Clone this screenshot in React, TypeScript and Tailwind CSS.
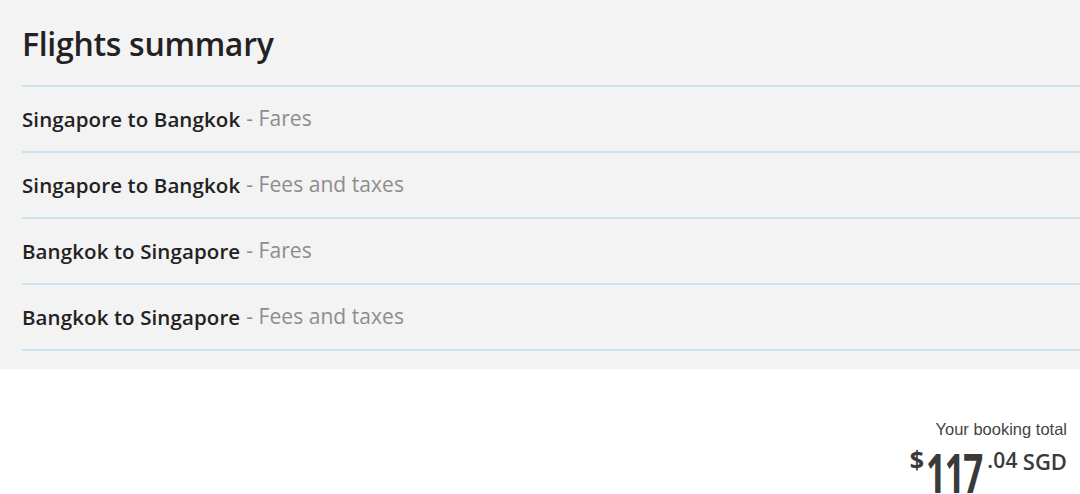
import React from "react";

type Row = { route: string; kind: string };

const rows: Row[] = [
  { route: "Singapore to Bangkok", kind: "Fares" },
  { route: "Singapore to Bangkok", kind: "Fees and taxes" },
  { route: "Bangkok to Singapore", kind: "Fares" },
  { route: "Bangkok to Singapore", kind: "Fees and taxes" },
];

export default function App() {
  return (
    <div className="w-[1080px] h-[494px] overflow-hidden bg-white">
      {/* Summary panel */}
      <section className="bg-[#f3f3f3] pl-[22px] pb-[18px] font-['Open_Sans',sans-serif]">
        <h1 className="pt-[25px] pb-[22px] text-[32px] leading-[38px] font-semibold text-[#222] tracking-[-0.3px]">
          Flights summary
        </h1>
        <ul className="border-b-2 border-[#cde3f1]">
          {rows.map((r, i) => (
            <li
              key={i}
              className="h-[66px] border-t-2 border-[#cde3f1] flex items-center text-[20.5px]"
            >
              <span className="font-semibold text-[#222] tracking-[0.1px]">{r.route}</span>
              <span className="text-[#8d8d8d] ml-[6px] text-[21px] tracking-[0.05px]">- {r.kind}</span>
            </li>
          ))}
        </ul>
      </section>

      {/* Total */}
      <div className="flex flex-col items-end pr-[13px] pt-[51px]">
        <div className="text-[16.5px] leading-[19px] text-[#444] font-['Liberation_Sans',sans-serif]">
          Your booking total
        </div>
        <div className="flex items-start text-[#3a3a3a] font-['Open_Sans',sans-serif] font-bold">
          <span className="text-[25px] leading-[25px] mt-[8px]">$</span>
          <span className="w-[61px] ml-[2px] inline-block whitespace-nowrap">
            <span className="text-[53px] leading-[53px] tracking-[-2px] mt-[7px] inline-block scale-x-[0.66] origin-left">
              117
            </span>
          </span>
          <span className="text-[21px] leading-[21px] font-semibold mt-[11px] tracking-[0.3px]">.04</span>
          <span className="text-[22px] leading-[22px] font-semibold ml-[5px] mt-[11px]">SGD</span>
        </div>
      </div>
    </div>
  );
}
